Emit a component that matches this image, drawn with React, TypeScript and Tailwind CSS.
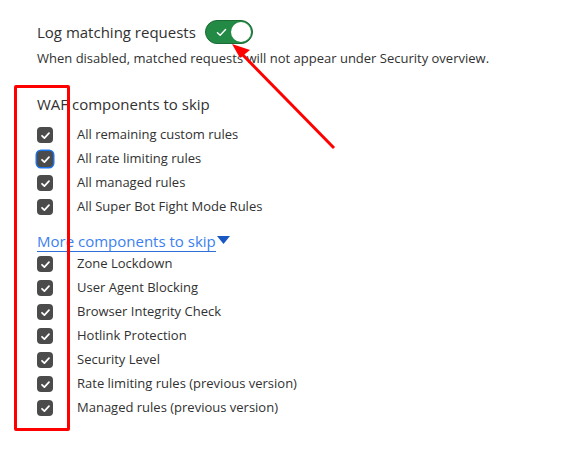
import React from "react";

const firstGroup = [
  "All remaining custom rules",
  "All rate limiting rules",
  "All managed rules",
  "All Super Bot Fight Mode Rules",
];

const secondGroup = [
  "Zone Lockdown",
  "User Agent Blocking",
  "Browser Integrity Check",
  "Hotlink Protection",
  "Security Level",
  "Rate limiting rules (previous version)",
  "Managed rules (previous version)",
];

function CheckBox({ focused }: { focused?: boolean }) {
  return (
    <span
      className={
        "flex h-4 w-4 shrink-0 items-center justify-center rounded-[4px] bg-[#4b4b4b] " +
        (focused ? "ring-[1.5px] ring-[#1a73e8]" : "")
      }
    >
      <svg width="11" height="11" viewBox="0 0 12 12" fill="none">
        <path d="M2.2 6.3 4.8 8.8 9.8 3.4" stroke="#fff" strokeWidth="1.9" strokeLinecap="round" strokeLinejoin="round" />
      </svg>
    </span>
  );
}

function Row({ label, focused }: { label: string; focused?: boolean }) {
  return (
    <div className="flex h-6 items-center">
      <CheckBox focused={focused} />
      <span className="ml-6 text-[13px] text-[#313131]">{label}</span>
    </div>
  );
}

export default function App() {
  return (
    <div className="relative h-[452px] w-[580px] overflow-hidden bg-white font-['Open_Sans',sans-serif]">
      <div className="flex flex-col pl-[37px] pt-[20px]">
        <div className="flex items-center">
          <span className="text-[15px] text-[#313131]">Log matching requests</span>
          <span className="ml-[9px] flex h-[24px] w-[48px] items-center justify-between rounded-full border border-[#1b6b35] bg-[#238a45] pl-[10px] pr-[1px]">
            <svg width="11" height="9" viewBox="0 0 12 10" fill="none">
              <path d="M1.5 5.2 4.5 8 10.5 1.8" stroke="#fff" strokeWidth="1.6" strokeLinecap="round" strokeLinejoin="round" />
            </svg>
            <span className="h-[20px] w-[20px] rounded-full bg-white" />
          </span>
        </div>
        <p className="mt-[5px] text-[13px] text-[#313131]">
          When disabled, matched requests will not appear under Security overview.
        </p>

        <h3 className="mt-[24px] text-[15px] text-[#313131]">WAF components to skip</h3>
        <div className="mt-[8px] flex flex-col">
          {firstGroup.map((l, i) => (
            <Row key={l} label={l} focused={i === 1} />
          ))}
        </div>

        <div className="mt-[12px] flex items-center">
          <span className="border-b border-[#2f6fd8] text-[15px] leading-[20px] text-[#3b7ff0]">
            More components to skip
          </span>
          <svg width="13" height="8" viewBox="0 0 13 8" className="ml-[1px] mb-[3px]">
            <path d="M0 0H13L6.5 8Z" fill="#1957c2" />
          </svg>
        </div>
        <div className="mt-0 flex flex-col">
          {secondGroup.map((l) => (
            <Row key={l} label={l} />
          ))}
        </div>
      </div>

      {/* annotation: red box around checkboxes */}
      <div className="absolute left-[14px] top-[85px] h-[346px] w-[56px] rounded-[2px] border-[3px] border-[#ff0000]" />

      {/* annotation: red arrow pointing at toggle */}
      <svg className="absolute left-0 top-0" width="580" height="452" viewBox="0 0 580 452">
        <line x1="334" y1="148" x2="238" y2="50" stroke="#ff0000" strokeWidth="3" />
        <path d="M232 44 L250 50 L240 58 Z" fill="#ff0000" />
      </svg>
    </div>
  );
}
